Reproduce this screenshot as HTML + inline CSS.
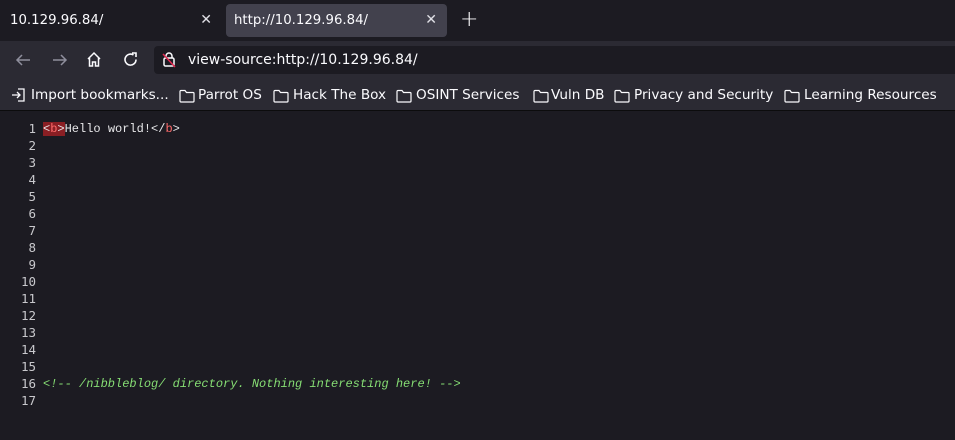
<!DOCTYPE html>
<html><head><style>
*{margin:0;padding:0;box-sizing:border-box}
body{width:955px;height:440px;overflow:hidden;background:#1c1b22;font-family:"DejaVu Sans","Liberation Sans",sans-serif;color:#fbfbfe;position:relative}
.tabs{position:absolute;left:0;top:0;width:955px;height:41px;background:#1c1b22}
.tab{position:absolute;top:4px;height:33px;font-size:13.3px;line-height:33px}
.t1{left:0;width:222px;padding-left:10px}
.t2{left:226px;width:221px;background:#42414d;border-radius:4px;padding-left:8px}
.x{position:absolute;right:10px;top:0;font-size:14px;color:#e0e0e6}
.plus{position:absolute;left:460px;top:4px;font-size:22px;line-height:31px;font-weight:300}
.tool{position:absolute;left:0;top:41px;width:955px;height:37px;background:#2b2a33}
.url{position:absolute;left:154px;top:5px;width:801px;height:28px;background:#1c1b22;border-radius:4px 0 0 4px;font-size:14px;line-height:28px;padding-left:34px}
.bm{position:absolute;left:0;top:78px;width:955px;height:33px;background:#2b2a33;font-size:13.6px;line-height:35px;border-bottom:1px solid #0c0c0d}
.bm span{position:absolute;top:0;white-space:nowrap}
.src{position:absolute;left:0;top:121px;font-family:"Liberation Mono",monospace;font-size:12px;line-height:17px}
.ln{position:absolute;left:0;width:36px;text-align:right;color:#c8c8cc;font-family:"DejaVu Sans Mono",monospace;font-size:12.5px;line-height:17px}
.code{position:absolute;left:43px;white-space:pre;color:#e8e8ea}
.b{color:#ff6b6b}
.cm{color:#86de74;font-style:italic}
svg{position:absolute}
.f{position:absolute;top:11px}
</style></head><body>
<div class="tabs">
<div class="tab t1">10.129.96.84/<span class="x">✕</span></div>
<div class="tab t2">http://10.129.96.84/<span class="x">✕</span></div>
<div class="plus">+</div>
</div>
<div class="tool">
<svg style="left:14px;top:11px" width="18" height="16" viewBox="0 0 18 16"><path d="M16 8H3M8 3L3 8l5 5" stroke="#8f8f9d" stroke-width="1.5" fill="none"/></svg>
<svg style="left:51px;top:11px" width="18" height="16" viewBox="0 0 18 16"><path d="M2 8h13M10 3l5 5-5 5" stroke="#8f8f9d" stroke-width="1.5" fill="none"/></svg>
<svg style="left:86px;top:10px" width="16" height="17" viewBox="0 0 16 17"><path d="M2 8L8 2l6 6M3.5 7v8h3v-4h3v4h3V7" stroke="#fbfbfe" stroke-width="1.5" fill="none"/></svg>
<svg style="left:122px;top:10px" width="17" height="17" viewBox="0 0 17 17"><path d="M14 8.5A5.5 5.5 0 1 1 11.5 4M10 2h4v4" stroke="#fbfbfe" stroke-width="1.6" fill="none"/></svg>
<div class="url">view-source:http://10.129.96.84/</div>
<svg style="left:162px;top:10px" width="14" height="17" viewBox="0 0 14 17"><rect x="2" y="7" width="10" height="8" rx="1.5" stroke="#fbfbfe" stroke-width="1.5" fill="none"/><path d="M4 7V5a3 3 0 0 1 6 0v2" stroke="#fbfbfe" stroke-width="1.5" fill="none"/><path d="M1 3l12 13" stroke="#e22850" stroke-width="1.5"/></svg>
</div>
<div class="bm">
<svg style="left:11px;top:10px" width="15" height="14" viewBox="0 0 15 14"><path d="M1 7h8M6 4l3 3-3 3M7 1h6v12H7" stroke="#fbfbfe" stroke-width="1.3" fill="none"/></svg>
<span style="left:31px">Import bookmarks...</span>
<svg class="f" style="left:179px" width="16" height="14" viewBox="0 0 16 14"><path d="M1 2.5Q1 1.5 2 1.5h4l1.5 2H14q1 0 1 1V12q0 1-1 1H2q-1 0-1-1z" stroke="#fbfbfe" stroke-width="1.2" fill="none"/></svg><span style="left:198px">Parrot OS</span>
<svg class="f" style="left:273px" width="16" height="14" viewBox="0 0 16 14"><path d="M1 2.5Q1 1.5 2 1.5h4l1.5 2H14q1 0 1 1V12q0 1-1 1H2q-1 0-1-1z" stroke="#fbfbfe" stroke-width="1.2" fill="none"/></svg><span style="left:293px">Hack The Box</span>
<svg class="f" style="left:396px" width="16" height="14" viewBox="0 0 16 14"><path d="M1 2.5Q1 1.5 2 1.5h4l1.5 2H14q1 0 1 1V12q0 1-1 1H2q-1 0-1-1z" stroke="#fbfbfe" stroke-width="1.2" fill="none"/></svg><span style="left:416px">OSINT Services</span>
<svg class="f" style="left:533px" width="16" height="14" viewBox="0 0 16 14"><path d="M1 2.5Q1 1.5 2 1.5h4l1.5 2H14q1 0 1 1V12q0 1-1 1H2q-1 0-1-1z" stroke="#fbfbfe" stroke-width="1.2" fill="none"/></svg><span style="left:551px">Vuln DB</span>
<svg class="f" style="left:614px" width="16" height="14" viewBox="0 0 16 14"><path d="M1 2.5Q1 1.5 2 1.5h4l1.5 2H14q1 0 1 1V12q0 1-1 1H2q-1 0-1-1z" stroke="#fbfbfe" stroke-width="1.2" fill="none"/></svg><span style="left:634px">Privacy and Security</span>
<svg class="f" style="left:784px" width="16" height="14" viewBox="0 0 16 14"><path d="M1 2.5Q1 1.5 2 1.5h4l1.5 2H14q1 0 1 1V12q0 1-1 1H2q-1 0-1-1z" stroke="#fbfbfe" stroke-width="1.2" fill="none"/></svg><span style="left:804px">Learning Resources</span>
</div>
<div class="src">
<div class="ln" style="top:-1px">1<br>2<br>3<br>4<br>5<br>6<br>7<br>8<br>9<br>10<br>11<br>12<br>13<br>14<br>15<br>16<br>17</div>
<div class="code" style="top:0"><span style="background:#8a1f24;">&lt;<span class="b">b</span>&gt;</span>Hello world!&lt;/<span class="b">b</span>&gt;</div>
<div class="code" style="top:255px"><span class="cm">&lt;!-- /nibbleblog/ directory. Nothing interesting here! --&gt;</span></div>
</div>
</body></html>
